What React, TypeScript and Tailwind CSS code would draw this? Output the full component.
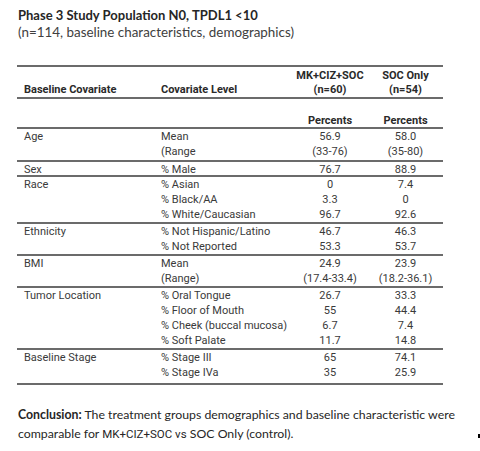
import React from "react";

type Group = { label: string; h: string; rows: [string, string, string][] };

const groups: Group[] = [
  { label: "Age", h: "h-[33px]", rows: [["Mean", "56.9", "58.0"], ["(Range", "(33-76)", "(35-80)"]] },
  { label: "Sex", h: "h-[15px]", rows: [["% Male", "76.7", "88.9"]] },
  {
    label: "Race",
    h: "h-[47px]",
    rows: [
      ["% Asian", "0", "7.4"],
      ["% Black/AA", "3.3", "0"],
      ["% White/Caucasian", "96.7", "92.6"],
    ],
  },
  {
    label: "Ethnicity",
    h: "h-[32px]",
    rows: [
      ["% Not Hispanic/Latino", "46.7", "46.3"],
      ["% Not Reported", "53.3", "53.7"],
    ],
  },
  { label: "BMI", h: "h-[32px]", rows: [["Mean", "24.9", "23.9"], ["(Range)", "(17.4-33.4)", "(18.2-36.1)"]] },
  {
    label: "Tumor Location",
    h: "h-[62px]",
    rows: [
      ["% Oral Tongue", "26.7", "33.3"],
      ["% Floor of Mouth", "55", "44.4"],
      ["% Cheek (buccal mucosa)", "6.7", "7.4"],
      ["% Soft Palate", "11.7", "14.8"],
    ],
  },
  {
    label: "Baseline Stage",
    h: "h-[33px]",
    rows: [
      ["% Stage III", "65", "74.1"],
      ["% Stage IVa", "35", "25.9"],
    ],
  },
];

const tableFont = { fontFamily: "Roboto, 'Noto Sans', sans-serif" };

export default function App() {
  return (
    <div className="w-[480px] h-[451px] bg-white relative overflow-hidden" style={{ fontFamily: "Lato, 'Open Sans', sans-serif" }}>
      <div className="pl-[18px] pt-[7px]">
        <div className="text-[13px] font-bold leading-[17px] text-[#262626]">Phase 3 Study Population N0, TPDL1 &lt;10</div>
        <div className="text-[13.4px] leading-[16px] text-[#404040]">(n=114, baseline characteristics, demographics)</div>
      </div>

      <div className="ml-[17px] mt-[25px] w-[426px] text-[11px] text-[#3a3a3a]" style={tableFont}>
        <div className="h-[32px] border-t-2 border-[#6b6b6b] flex items-end font-bold text-[#2a2a2a] leading-[14px]">
          <div className="w-[138px] pl-[7px]">Baseline Covariate</div>
          <div className="w-[137px] pl-[6px]">Covariate Level</div>
          <div className="w-[76px] text-center">MK+CIZ+SOC<br />(n=60)</div>
          <div className="w-[75px] text-center">SOC Only<br />(n=54)</div>
        </div>
        <div className="h-[30px] border-t-2 border-[#6b6b6b] flex items-end font-bold text-[#2a2a2a] leading-[12px]">
          <div className="w-[138px]" />
          <div className="w-[137px]" />
          <div className="w-[76px] text-center">Percents</div>
          <div className="w-[75px] text-center">Percents</div>
        </div>
        {groups.map((g, gi) => (
          <div
            key={g.label}
            className={`${g.h} border-t-2 border-[#6b6b6b] flex leading-[15px] ${gi === groups.length - 1 ? "border-b-2 box-content" : ""}`}
          >
            <div className="w-[138px] pl-[7px]">{g.label}</div>
            <div className="flex flex-col">
              {g.rows.map((r) => (
                <div key={r[0]} className="flex">
                  <div className="w-[137px] pl-[6px]">{r[0]}</div>
                  <div className="w-[76px] text-center">{r[1]}</div>
                  <div className="w-[75px] text-center">{r[2]}</div>
                </div>
              ))}
            </div>
          </div>
        ))}
      </div>

      <div className="pl-[18px] pt-[20px] pr-[4px] text-[12.3px] leading-[19px] text-[#262626]">
        <p>
          <span className="font-bold">Conclusion:</span> The treatment groups demographics and baseline characteristic were
        </p>
        <p>
          comparable for <span className="text-[11.5px]" style={tableFont}>MK+CIZ+SOC vs</span> SOC Only (control).
        </p>
      </div>
      <div className="absolute left-[478px] top-[434px] w-[2px] h-[4px] bg-black" />
    </div>
  );
}
